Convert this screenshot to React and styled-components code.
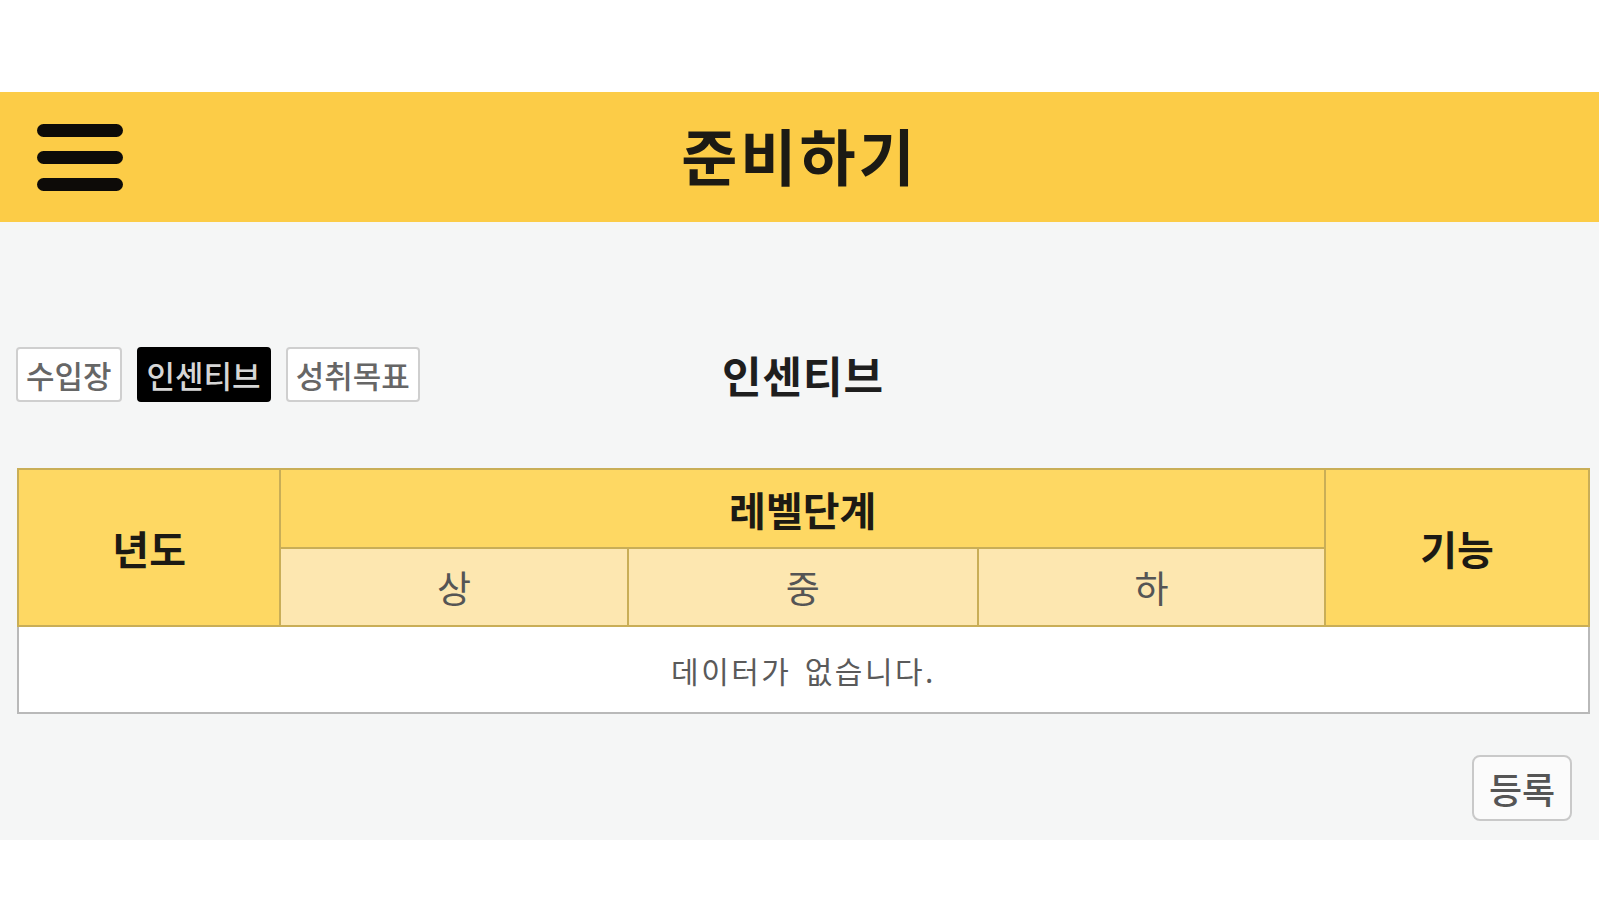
import React from 'react';
import styled, { createGlobalStyle } from 'styled-components';

const GlobalStyle = createGlobalStyle`
  body {
    margin: 0;
    background: #ffffff;
    font-family: 'Noto Sans CJK KR', 'Noto Sans', sans-serif;
  }
`;

const Page = styled.div`
  padding-top: 92px;
  background: #ffffff;
`;

const TopBar = styled.header`
  height: 130px;
  background: #fccc47;
  display: grid;
  grid-template-columns: 1fr auto 1fr;
  align-items: center;
  padding: 0 37px;
`;

const MenuButton = styled.button`
  justify-self: start;
  display: flex;
  padding: 0;
  margin: 0;
  border: none;
  background: none;
  cursor: pointer;
`;

const Title = styled.h1`
  margin: 0 0 6px;
  font-size: 61px;
  line-height: 1;
  font-weight: 700;
  color: #1c1a14;
  letter-spacing: 3px;
`;

const Main = styled.main`
  background: #f5f6f6;
  padding: 125px 9px 19px 17px;
`;

const TabRow = styled.div`
  display: grid;
  grid-template-columns: 1fr auto 1fr;
  align-items: center;
  margin-left: -1px;
`;

const Tabs = styled.div`
  display: flex;
  gap: 15px;
`;

const Tab = styled.button`
  height: 55px;
  padding: 0 8px;
  border: 2px solid ${({ $active }) => ($active ? '#000000' : '#cfcfcf')};
  border-radius: 4px;
  background: ${({ $active }) => ($active ? '#000000' : '#ffffff')};
  color: ${({ $active }) => ($active ? '#d6d6d6' : '#666666')};
  font-family: inherit;
  font-size: 31px;
  font-weight: 500;
  letter-spacing: 0;
  line-height: 1;
`;

const SectionTitle = styled.h2`
  margin: 0;
  font-size: 43px;
  line-height: 1;
  font-weight: 700;
  color: #1e1e1e;
  letter-spacing: 1px;
`;

const Table = styled.table`
  width: 100%;
  margin-top: 66px;
  border-collapse: collapse;
  table-layout: fixed;
  border: 2px solid #b9b9b9;
  background: #ffffff;
`;

const HeadCell = styled.th`
  height: ${({ $h }) => $h}px;
  padding: 0;
  background: ${({ $sub }) => ($sub ? '#fde7b0' : '#fed863')};
  border: 2px solid #c9ae57;
  color: ${({ $sub }) => ($sub ? '#555555' : '#1c1a14')};
  font-size: ${({ $sub }) => ($sub ? '37px' : '40px')};
  font-weight: ${({ $sub }) => ($sub ? 400 : 700)};
  line-height: 1;
  text-align: center;
`;

const EmptyCell = styled.td`
  height: 85px;
  padding: 0;
  border: 2px solid #b9b9b9;
  text-align: center;
  color: #5a5a5a;
  font-size: 30px;
  line-height: 1;
  letter-spacing: 2.5px;
  word-spacing: 4px;
`;

const Footer = styled.div`
  display: flex;
  justify-content: flex-end;
  margin-top: 41px;
  padding-right: 18px;
`;

const SubmitButton = styled.button`
  width: 100px;
  height: 66px;
  border: 2px solid #c9c9c9;
  border-radius: 8px;
  background: #fbfbfb;
  color: #555555;
  font-family: inherit;
  font-size: 36px;
  font-weight: 500;
  line-height: 1;
  padding: 0;
`;

const MenuIcon = () => (
  <svg width="86" height="67" viewBox="0 0 86 67">
    <g stroke="#0d0b08" strokeWidth="13" strokeLinecap="round">
      <line x1="6.5" y1="6.5" x2="79.5" y2="6.5" />
      <line x1="6.5" y1="33.5" x2="79.5" y2="33.5" />
      <line x1="6.5" y1="60.5" x2="79.5" y2="60.5" />
    </g>
  </svg>
);

const tabs = ['수입장', '인센티브', '성취목표'];

export default function App() {
  return (
    <Page>
      <GlobalStyle />
      <TopBar>
        <MenuButton aria-label="menu">
          <MenuIcon />
        </MenuButton>
        <Title>준비하기</Title>
        <span />
      </TopBar>
      <Main>
        <TabRow>
          <Tabs>
            {tabs.map((t) => (
              <Tab key={t} $active={t === '인센티브'}>
                {t}
              </Tab>
            ))}
          </Tabs>
          <SectionTitle>인센티브</SectionTitle>
          <span />
        </TabRow>
        <Table>
          <colgroup>
            <col style={{ width: '16.7%' }} />
            <col style={{ width: '22.1%' }} />
            <col style={{ width: '22.3%' }} />
            <col style={{ width: '22.1%' }} />
            <col style={{ width: '16.8%' }} />
          </colgroup>
          <thead>
            <tr>
              <HeadCell rowSpan={2} $h={77}>년도</HeadCell>
              <HeadCell colSpan={3} $h={77}>레벨단계</HeadCell>
              <HeadCell rowSpan={2} $h={77}>기능</HeadCell>
            </tr>
            <tr>
              <HeadCell $sub $h={76}>상</HeadCell>
              <HeadCell $sub $h={76}>중</HeadCell>
              <HeadCell $sub $h={76}>하</HeadCell>
            </tr>
          </thead>
          <tbody>
            <tr>
              <EmptyCell colSpan={5}>데이터가 없습니다.</EmptyCell>
            </tr>
          </tbody>
        </Table>
        <Footer>
          <SubmitButton>등록</SubmitButton>
        </Footer>
      </Main>
    </Page>
  );
}
